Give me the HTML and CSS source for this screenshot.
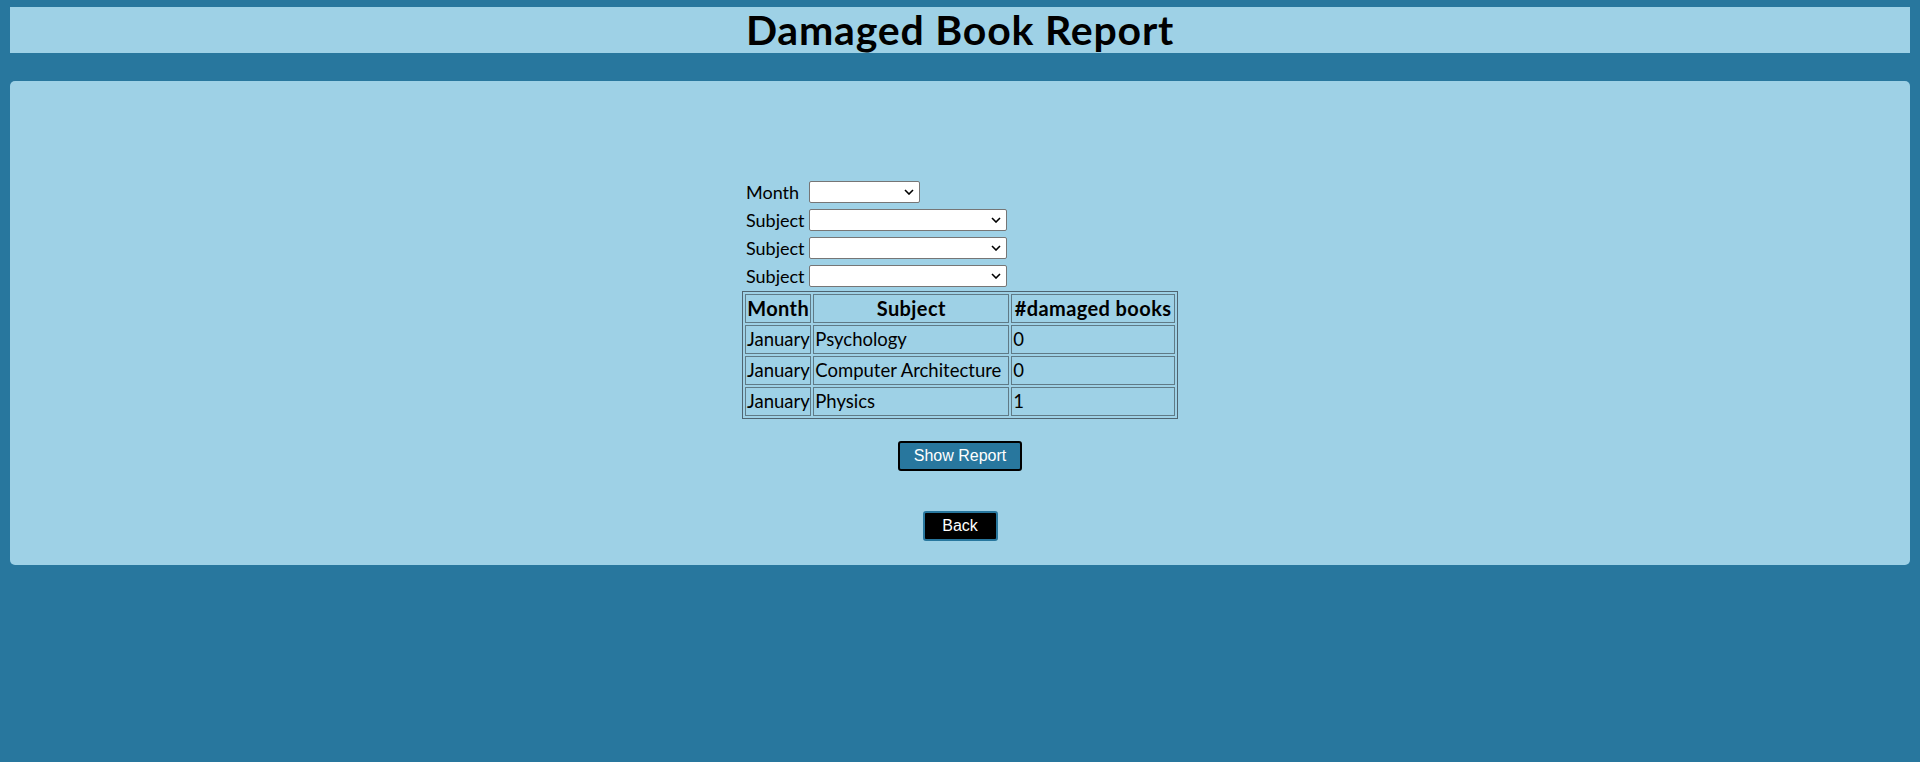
FILE: index.html
```html
<!DOCTYPE html>
<html lang="en">
<head>
<meta charset="utf-8">
<title>Damaged Book Report</title>
<link rel="stylesheet" href="styles.css">
</head>
<body>
<header class="banner">
  <h1 class="banner-title">Damaged Book Report</h1>
</header>
<main class="panel">
  <form class="report-form">
    <div class="report-box">
      <div class="fields">
        <label class="field-label" for="month">Month</label>
        <select id="month" class="sel sel-month"><option></option></select>
        <label class="field-label" for="s1">Subject</label>
        <select id="s1" class="sel sel-subject"><option></option></select>
        <label class="field-label" for="s2">Subject</label>
        <select id="s2" class="sel sel-subject"><option></option></select>
        <label class="field-label" for="s3">Subject</label>
        <select id="s3" class="sel sel-subject"><option></option></select>
      </div>
      <table class="report">
        <thead>
          <tr><th class="c-month">Month</th><th class="c-subject">Subject</th><th class="c-count">#damaged books</th></tr>
        </thead>
        <tbody>
          <tr><td>January</td><td>Psychology</td><td>0</td></tr>
          <tr><td>January</td><td>Computer Architecture</td><td>0</td></tr>
          <tr><td>January</td><td>Physics</td><td>1</td></tr>
        </tbody>
      </table>
    </div>
    <button type="button" class="btn-show">Show Report</button>
  </form>
  <div class="back-row">
    <button type="button" class="btn-back">Back</button>
  </div>
</main>
</body>
</html>
```
FILE: styles.css
```css
html, body {
  margin: 0;
  padding: 0;
}
body {
  background: #28779e;
  padding: 7px 10px 0;
  font-family: Lato, "Open Sans", sans-serif;
  color: #000;
}
.banner {
  background: #9ed1e6;
  height: 46px;
  display: flex;
  align-items: center;
  justify-content: center;
}
.banner-title {
  margin: 0;
  font-size: 41px;
  font-weight: 700;
  line-height: 46px;
  letter-spacing: 0.8px;
}
.panel {
  margin-top: 28px;
  background: #9ed1e6;
  border-radius: 5px;
  padding: 100px 0 24px;
  display: flex;
  flex-direction: column;
  align-items: center;
}
.report-form {
  display: flex;
  flex-direction: column;
  align-items: center;
}
.report-box {
  display: flex;
  flex-direction: column;
  align-items: flex-start;
}
.fields {
  display: grid;
  grid-template-columns: auto auto;
  grid-auto-rows: 22px;
  row-gap: 6px;
  column-gap: 4px;
  padding-left: 4px;
  align-items: center;
  justify-items: start;
}
.fields .field-label {
  font-size: 18px;
  line-height: 22px;
}
.sel {
  -webkit-appearance: none;
  appearance: none;
  height: 22px;
  background-color: #fff;
  background-image: url("data:image/svg+xml,%3Csvg xmlns='http://www.w3.org/2000/svg' width='10' height='6' viewBox='0 0 10 6'%3E%3Cpath d='M1 1l4 4 4-4' fill='none' stroke='%23000' stroke-width='1.6'/%3E%3C/svg%3E");
  background-repeat: no-repeat;
  background-position: right 5px center;
  background-size: 10px 6px;
  border: 1px solid #767676;
  border-radius: 2px;
  font-size: 13px;
  margin: 0;
}
.sel-month { width: 111px; }
.sel-subject { width: 198px; }
.report {
  margin-top: 4px;
  border: 1px solid #4f6470;
  border-spacing: 2px;
  table-layout: fixed;
  width: 436px;
  font-size: 18.5px;
}
.report th, .report td {
  border: 1px solid #5f7a86;
  padding: 1px 1px;
  height: 25px;
  line-height: 25px;
  text-align: left;
  white-space: nowrap;
  overflow: hidden;
}
.report th {
  text-align: center;
  font-weight: 700;
  font-size: 20px;
  letter-spacing: 0.4px;
}
.report .c-month { width: 62px; }
.report .c-subject { width: 191px; }
.report .c-count { width: 159px; }
.btn-show {
  margin-top: 22px;
  width: 124px;
  height: 30px;
  background: #28779e;
  color: #fff;
  border: 2px solid #000;
  border-radius: 3px;
  font-family: "Liberation Sans", Arial, sans-serif;
  font-size: 16px;
  padding: 0;
  cursor: pointer;
}
.back-row {
  margin-top: 40px;
}
.btn-back {
  width: 75px;
  height: 30px;
  background: #000;
  color: #fff;
  border: 2px solid #28779e;
  border-radius: 3px;
  font-family: "Liberation Sans", Arial, sans-serif;
  font-size: 16px;
  padding: 0;
  cursor: pointer;
}
```
